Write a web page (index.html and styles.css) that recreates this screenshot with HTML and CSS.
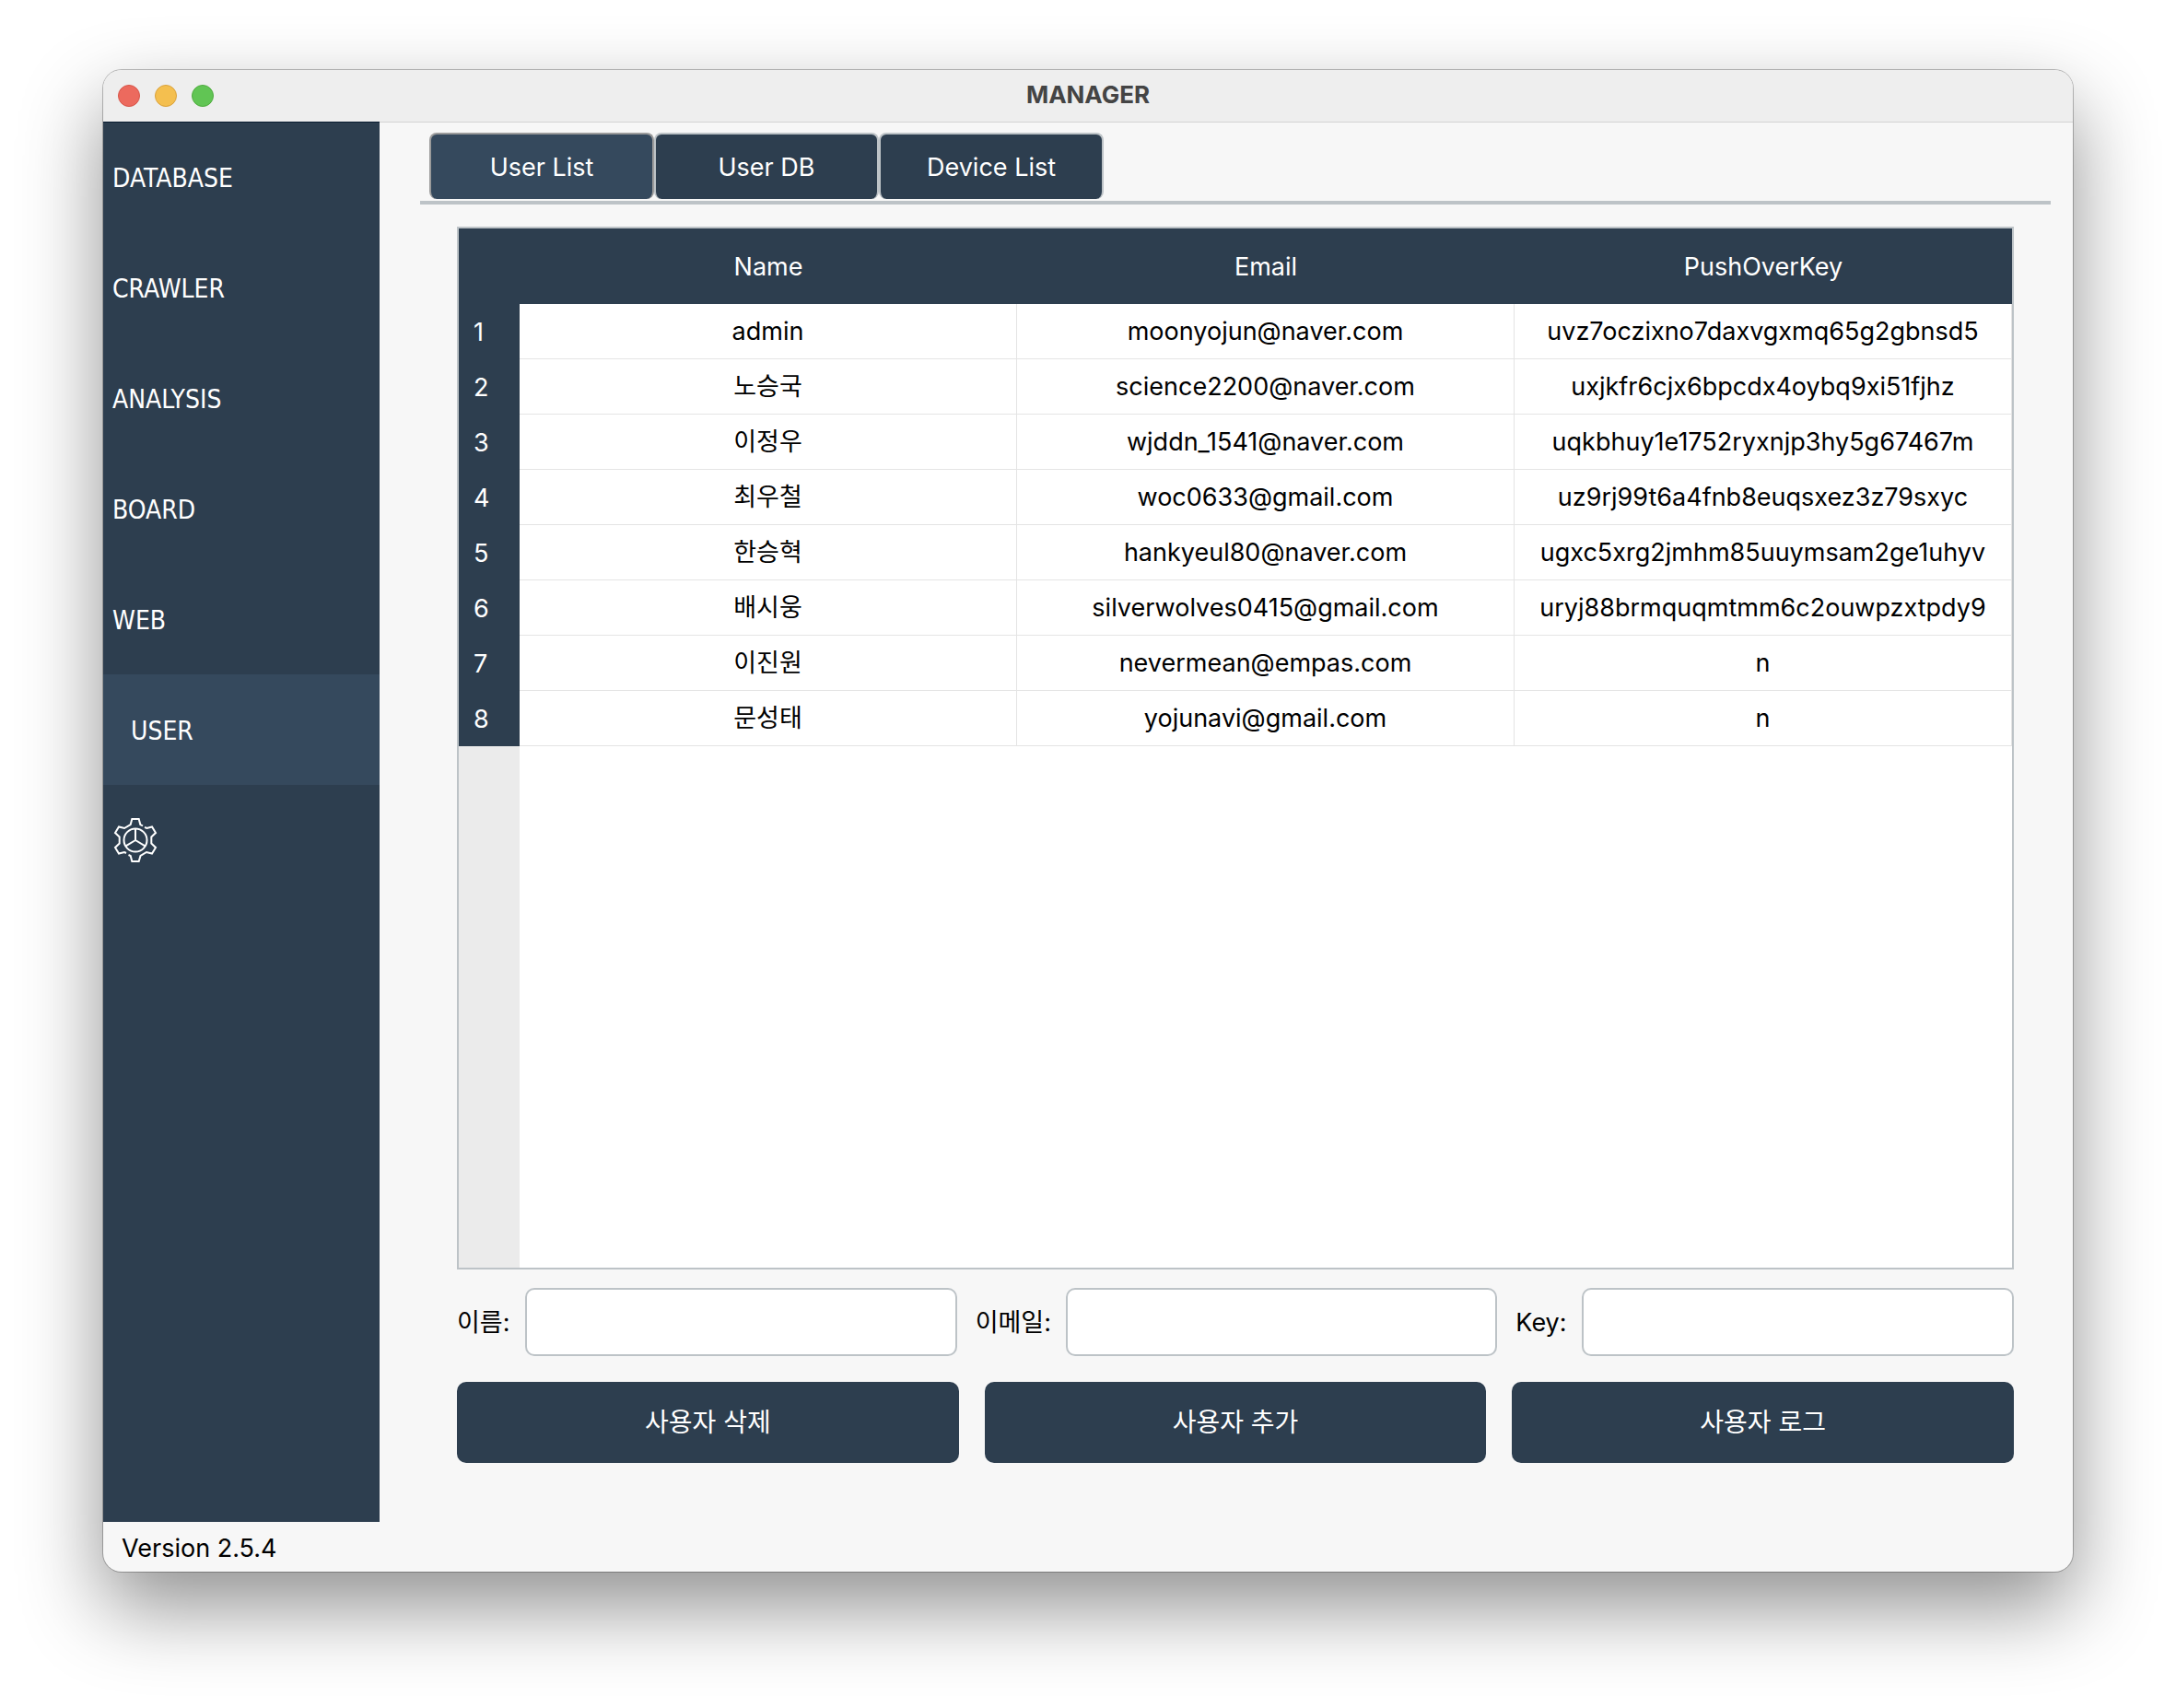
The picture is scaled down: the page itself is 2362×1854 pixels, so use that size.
FILE: index.html
```html
<!DOCTYPE html>
<html lang="ko">
<head>
<meta charset="utf-8">
<title>MANAGER</title>
<link rel="stylesheet" href="styles.css">
</head>
<body>
<div class="window">
  <header class="titlebar">
    <div class="lights">
      <button class="light close" aria-label="Close"></button>
      <button class="light minimize" aria-label="Minimize"></button>
      <button class="light maximize" aria-label="Maximize"></button>
    </div>
    <h1 class="title">MANAGER</h1>
  </header>
  <div class="body">
    <nav class="sidebar">
      <a class="nav-item" href="#database">DATABASE</a>
      <a class="nav-item" href="#crawler">CRAWLER</a>
      <a class="nav-item" href="#analysis">ANALYSIS</a>
      <a class="nav-item" href="#board">BOARD</a>
      <a class="nav-item" href="#web">WEB</a>
      <a class="nav-item selected" href="#user">USER</a>
      <a class="nav-item icon-item" href="#settings" aria-label="Settings">
        <svg class="gear" viewBox="0 0 48 48" aria-hidden="true">
          <path d="M34 10L36.5 11L42 9.5L46 16L41.300 20.500V27.500L46 32L42 38.500L36 37L29.500 41L27.700 47H20.300L18.700 41L16.500 40"/>
          <path d="M14 38L12 37L6 38.500L2 32L6.700 27.500V20.500L2 16L6 9.500L12 11L18.700 7L20.300 1H27.700L29.300 7L32 8.500"/>
          <circle cx="24" cy="24" r="12.500"/>
          <path d="M24 11.500V24L13.500 30.300M24 24L34.500 30.300"/>
        </svg>
      </a>
    </nav>
    <main class="main">
      <div class="tabs" role="tablist">
        <button class="tab active" role="tab" aria-selected="true">User List</button>
        <button class="tab" role="tab" aria-selected="false">User DB</button>
        <button class="tab" role="tab" aria-selected="false">Device List</button>
      </div>
      <section class="pane">
        <div class="table-frame">
          <table class="users">
            <colgroup><col class="col-index"><col><col><col></colgroup>
            <thead>
              <tr><td></td><th scope="col">Name</th><th scope="col">Email</th><th scope="col">PushOverKey</th></tr>
            </thead>
            <tbody>
              <tr><th scope="row">1</th><td>admin</td><td>moonyojun@naver.com</td><td>uvz7oczixno7daxvgxmq65g2gbnsd5</td></tr>
              <tr><th scope="row">2</th><td>노승국</td><td>science2200@naver.com</td><td>uxjkfr6cjx6bpcdx4oybq9xi51fjhz</td></tr>
              <tr><th scope="row">3</th><td>이정우</td><td>wjddn_1541@naver.com</td><td>uqkbhuy1e1752ryxnjp3hy5g67467m</td></tr>
              <tr><th scope="row">4</th><td>최우철</td><td>woc0633@gmail.com</td><td>uz9rj99t6a4fnb8euqsxez3z79sxyc</td></tr>
              <tr><th scope="row">5</th><td>한승혁</td><td>hankyeul80@naver.com</td><td>ugxc5xrg2jmhm85uuymsam2ge1uhyv</td></tr>
              <tr><th scope="row">6</th><td>배시웅</td><td>silverwolves0415@gmail.com</td><td>uryj88brmquqmtmm6c2ouwpzxtpdy9</td></tr>
              <tr><th scope="row">7</th><td>이진원</td><td>nevermean@empas.com</td><td>n</td></tr>
              <tr><th scope="row">8</th><td>문성태</td><td>yojunavi@gmail.com</td><td>n</td></tr>
            </tbody>
          </table>
        </div>
        <form class="form">
          <div class="fields">
            <label for="name">이름:</label><input id="name" type="text">
            <label for="email">이메일:</label><input id="email" type="text">
            <label for="key">Key:</label><input id="key" type="text">
          </div>
          <div class="actions">
            <button type="button" class="action">사용자 삭제</button>
            <button type="button" class="action">사용자 추가</button>
            <button type="button" class="action">사용자 로그</button>
          </div>
        </form>
      </section>
    </main>
  </div>
  <footer class="statusbar">Version 2.5.4</footer>
</div>
</body>
</html>
```
FILE: styles.css
```css
:root {
  --navy: #2d3e4f;
  --navy-light: #35495d;
  --line: #bdc3c7;
  --grid: #e4e4e4;
  --surface: #f7f7f7;
}

* {
  box-sizing: border-box;
}

body {
  margin: 0;
  min-height: 100vh;
  padding: 76px 112px 148px;
  display: flex;
  background: #fff;
  color: #000;
  font: 27px/32px Inter, "Noto Sans CJK KR", sans-serif;
}

button,
input {
  font: inherit;
}

.window {
  flex: 1;
  min-width: 0;
  display: flex;
  flex-direction: column;
  border-radius: 20px;
  overflow: hidden;
  background: var(--surface);
  box-shadow: 0 0 0 1px rgba(0, 0, 0, 0.25), 0 38px 88px rgba(0, 0, 0, 0.44);
}

.titlebar {
  height: 56px;
  padding: 0 16px;
  display: grid;
  grid-template-columns: 1fr auto 1fr;
  align-items: center;
  background: #eee;
}

.lights {
  display: flex;
  gap: 16px;
}

.light {
  width: 24px;
  height: 24px;
  padding: 0;
  border: 1px solid;
  border-radius: 50%;
}

.close {
  background: #ec6a5e;
  border-color: #d65549;
}

.minimize {
  background: #f4bf4f;
  border-color: #d9a13c;
}

.maximize {
  background: #61c554;
  border-color: #4fab3f;
}

.title {
  margin: 0;
  padding-bottom: 2px;
  font-size: 26px;
  font-weight: 700;
  color: #444;
}

.body {
  flex: 1;
  display: flex;
}

.sidebar {
  width: 300px;
  flex: none;
  display: flex;
  flex-direction: column;
  background: var(--navy);
  box-shadow: inset 0 1px #0a1c31;
}

.nav-item {
  height: 120px;
  padding: 4px 10px 0;
  display: flex;
  align-items: center;
  color: #fff;
  font-family: "DejaVu Sans Condensed", "DejaVu Sans", sans-serif;
  font-size: 28px;
  font-stretch: condensed;
  text-decoration: none;
}

.nav-item.selected {
  padding-left: 30px;
  background: var(--navy-light);
}

.nav-item.icon-item {
  padding: 0 11px;
}

.gear {
  width: 48px;
  height: 48px;
  fill: none;
  stroke: #fff;
  stroke-width: 2;
}

.main {
  flex: 1;
  min-width: 0;
  padding: 11px 24px 64px 44px;
  display: flex;
  flex-direction: column;
  border-top: 1px solid #d3d3d3;
}

.tabs {
  padding: 0 10px 2px;
  display: flex;
}

.tab {
  width: 244px;
  height: 72px;
  padding: 2px 0 0;
  border: 2px solid var(--line);
  border-bottom: 0;
  border-radius: 8px;
  background: var(--navy);
  color: #fff;
}

.tab.active {
  border-color: #9b9b9b;
  background: var(--navy-light);
}

.pane {
  flex: 1;
  padding: 24px 40px 0;
  display: flex;
  flex-direction: column;
  border-top: 4px solid var(--line);
}

.table-frame {
  flex: 1;
  border: 2px solid var(--line);
  background: linear-gradient(to right, #ebebeb 66px, #fff 66px);
}

.users {
  width: 100%;
  table-layout: fixed;
  border-collapse: separate;
  border-spacing: 0;
  text-align: center;
}

.col-index {
  width: 66px;
}

.users th,
.users td {
  height: 60px;
  padding: 0;
  font-weight: 400;
}

.users thead th,
.users thead td {
  height: 82px;
  padding-top: 2px;
}

.users thead,
.users tbody th {
  background: var(--navy);
  color: #fff;
}

.users tbody th {
  padding: 2px 0 0 16px;
  text-align: left;
}

.users tbody td {
  border-right: 1px solid var(--grid);
  border-bottom: 1px solid var(--grid);
  background: #fff;
}

.fields {
  margin-top: 20px;
  display: grid;
  grid-template-columns: 74px 1fr 118px 1fr 92px 1fr;
  align-items: center;
}

.fields label {
  padding-top: 2px;
}

.fields input {
  width: 100%;
  height: 74px;
  padding: 0 12px;
  border: 2px solid var(--line);
  border-radius: 10px;
  background: #fff;
}

.fields input + label {
  padding-left: 20px;
}

.actions {
  margin-top: 28px;
  display: grid;
  grid-template-columns: repeat(3, 1fr);
  gap: 28px;
}

.action {
  height: 88px;
  border: 0;
  border-radius: 10px;
  background: var(--navy);
  color: #fff;
  font-size: 28px;
}

.statusbar {
  height: 54px;
  padding: 4px 20px 0;
  display: flex;
  align-items: center;
}
```
